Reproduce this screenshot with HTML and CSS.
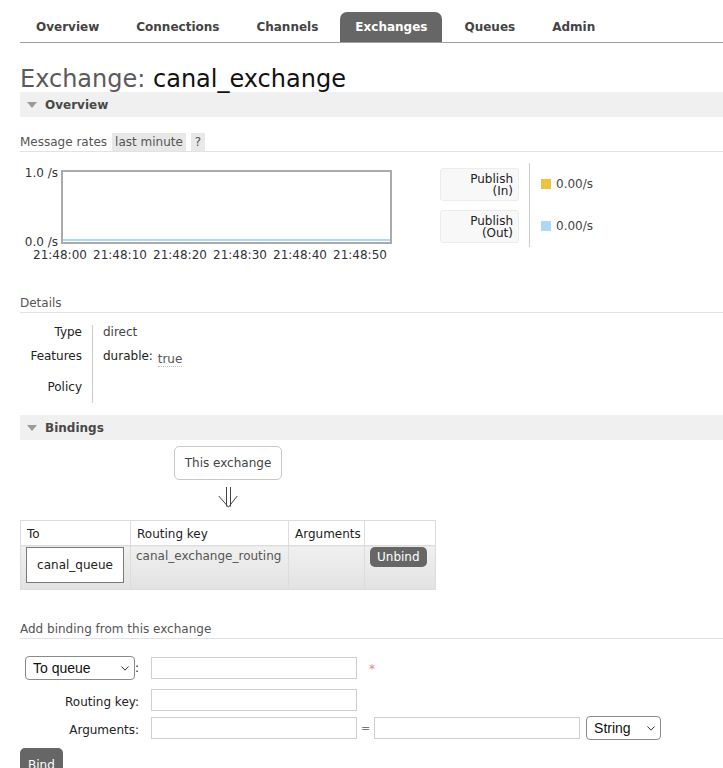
FILE: index.html
```html
<!DOCTYPE html>
<html>
<head>
<meta charset="utf-8">
<title>Exchange: canal_exchange</title>
<link rel="stylesheet" href="styles.css">
</head>
<body>
<div class="page">
  <ul class="tabs">
    <li>Overview</li>
    <li>Connections</li>
    <li>Channels</li>
    <li class="active">Exchanges</li>
    <li>Queues</li>
    <li>Admin</li>
  </ul>

  <h1><span class="pre">Exchange:</span> canal_exchange</h1>

  <div class="section">
    <div class="bar"><span class="tri"></span>Overview</div>
    <h3 class="sub"><span>Message rates</span><span class="pill">last minute</span><span class="pill q">?</span></h3>
    <div class="chart-row">
      <div class="chart">
        <div class="ylab"><span>1.0 /s</span><span>0.0 /s</span></div>
        <div class="plot"><div class="line"></div></div>
        <div class="xlab"><span>21:48:00</span><span>21:48:10</span><span>21:48:20</span><span>21:48:30</span><span>21:48:40</span><span>21:48:50</span></div>
      </div>
      <table class="legend">
        <tr>
          <td class="k"><div class="lbox"><div>Publish</div><div>(In)</div></div></td>
          <td class="v"><span class="sw yellow"></span>0.00/s</td>
        </tr>
        <tr>
          <td class="k"><div class="lbox"><div>Publish</div><div>(Out)</div></div></td>
          <td class="v"><span class="sw blue"></span>0.00/s</td>
        </tr>
      </table>
    </div>

    <h3 class="sub details-h">Details</h3>
    <table class="facts">
      <tr class="r1"><th>Type</th><td>direct</td></tr>
      <tr class="r2"><th>Features</th><td><span class="fk">durable:</span> <span class="tv">true</span></td></tr>
      <tr class="r3"><th>Policy</th><td></td></tr>
    </table>
  </div>

  <div class="section bind-sec">
    <div class="bar"><span class="tri"></span>Bindings</div>
    <div class="diagram">
      <div class="ex-box">This exchange</div>
      <svg class="arrow" width="20" height="22" viewBox="0 0 20 22">
        <path d="M8.5 1V20.5M12.5 1V20.5M0.8 10L10.5 21.2L19.2 10" fill="none" stroke="#444" stroke-width="1"/>
      </svg>
    </div>
    <table class="bt">
      <colgroup><col class="c1"><col class="c2"><col class="c3"><col class="c4"></colgroup>
      <tr><th>To</th><th>Routing key</th><th>Arguments</th><th></th></tr>
      <tr>
        <td class="to"><div class="qbox">canal_queue</div></td>
        <td class="rk">canal_exchange_routing</td>
        <td></td>
        <td class="act"><button class="btn small">Unbind</button></td>
      </tr>
    </table>
  </div>

  <h3 class="sub add-h">Add binding from this exchange</h3>
  <table class="form">
    <tr class="f1">
      <th><span class="sel"><select><option>To queue</option><option>To exchange</option></select><svg width="8" height="5" viewBox="0 0 8 5"><path d="M0.5 0.5L4 4.2L7.5 0.5" fill="none" stroke="#333" stroke-width="1"/></svg></span>:</th>
      <td><input class="inp" type="text"><span class="req">*</span></td>
    </tr>
    <tr class="f2">
      <th><span class="lab">Routing key:</span></th>
      <td><input class="inp" type="text"></td>
    </tr>
    <tr class="f3">
      <th><span class="lab">Arguments:</span></th>
      <td><input class="inp" type="text"><span class="eq">=</span><input class="inp" type="text"><span class="sel str"><select><option>String</option><option>Number</option></select><svg width="8" height="5" viewBox="0 0 8 5"><path d="M0.5 0.5L4 4.2L7.5 0.5" fill="none" stroke="#333" stroke-width="1"/></svg></span></td>
    </tr>
  </table>
  <button class="btn big">Bind</button>
</div>
</body>
</html>
```

FILE: styles.css
```css
* { box-sizing: border-box; }
html, body { margin: 0; padding: 0; background: #fff; }
body {
  font-family: "DejaVu Sans", Verdana, sans-serif;
  font-size: 12px;
  color: #484848;
}
.page { padding-left: 20px; overflow: hidden; }

/* tabs */
.tabs {
  display: flex;
  list-style: none;
  margin: 12px 0 0;
  padding: 0 0 0 1px;
  height: 31px;
  border-bottom: 1px solid #a0a0a0;
}
.tabs li {
  height: 30px;
  padding: 1px 15px 0;
  margin-right: 7px;
  line-height: 29px;
  font-weight: bold;
  color: #444;
  border-radius: 7px 7px 0 0;
}
.tabs li.active { background: #666; color: #fff; }

/* title */
h1 {
  margin: 23px 0 0;
  font-size: 24px;
  line-height: 26px;
  font-weight: normal;
  color: #111;
}
h1 .pre { color: #5a5a5a; }

/* section bars */
.bar {
  display: flex;
  align-items: center;
  height: 25px;
  background: #f0f0f0;
  font-weight: bold;
  color: #484848;
}
.tri {
  width: 0; height: 0;
  border-left: 5px solid transparent;
  border-right: 5px solid transparent;
  border-top: 6px solid #9a9a9a;
  margin: 0 8px 0 7px;
}

/* sub headings */
.sub {
  display: flex;
  gap: 5px;
  margin: 16px 0 0;
  font-size: 12px;
  font-weight: normal;
  line-height: 18px;
  color: #555;
  border-bottom: 1px solid #e2e2e2;
}
.pill { background: #e8e8e8; padding: 0 3px; }
.pill.q { padding: 0 4px; }
.details-h { margin-top: 32px; }
.add-h { margin-top: 30px; }

/* chart */
.chart-row { display: flex; align-items: flex-start; margin-top: 11px; }
.chart {
  display: grid;
  grid-template-columns: 41px 331px;
  margin-top: 7px;
  color: #333;
}
.ylab {
  display: flex;
  flex-direction: column;
  justify-content: space-between;
  align-items: flex-end;
  padding-right: 3px;
  margin: -4px 0 -5px;
  line-height: 14px;
}
.plot {
  height: 74px;
  border: 2px solid #aaa;
  background: #fff;
  display: flex;
  align-items: flex-end;
}
.plot .line { width: 100%; height: 2px; background: #afd8f8; margin-bottom: 1px; }
.xlab {
  grid-column: 1 / 3;
  display: flex;
  padding-left: 13px;
  margin-top: 4px;
  line-height: 14px;
}
.xlab span { width: 60px; flex: none; }

/* legend */
.legend { margin-left: 48px; border-collapse: collapse; }
.legend td { height: 42px; padding: 0; vertical-align: middle; }
.legend td.k { padding-right: 10px; border-right: 1px solid #ccc; }
.legend td.v { padding-left: 10px; color: #444; }
.lbox {
  display: flex;
  flex-direction: column;
  align-items: flex-end;
  justify-content: center;
  width: 79px;
  height: 33px;
  background: #f8f8f8;
  border: 1px solid #ececec;
  border-radius: 3px;
  padding: 1px 5px 0 0;
  line-height: 12px;
  color: #222;
}
.lbox div { height: 12px; line-height: 12px; }
.sw { display: inline-block; width: 10px; height: 10px; margin: 0 5px 0 1px; vertical-align: -1px; }
.sw.yellow { background: #edc240; }
.sw.blue { background: #afd8f8; }

/* details */
.facts { border-collapse: separate; border-spacing: 0; margin-top: 12px; }
.facts th, .facts td { line-height: 14px; vertical-align: top; padding-top: 0; padding-bottom: 0; }
.facts th {
  width: 73px;
  text-align: right;
  font-weight: normal;
  color: #222;
  padding-right: 10px;
  border-right: 1px solid #ccc;
}
.facts td { padding-left: 10px; color: #444; }
.facts .r1 th, .facts .r1 td { padding-bottom: 5px; }
.facts .r2 th, .facts .r2 td { padding-top: 5px; padding-bottom: 8px; }
.facts .r3 th, .facts .r3 td { padding-top: 8px; padding-bottom: 9px; }
.fk { color: #222; }
.tv { display: inline-block; margin-left: 1px; border-bottom: 1px dotted #bbb; line-height: 14px; margin-bottom: -3px; vertical-align: -3px; color: #555; }

/* bindings */
.bind-sec { margin-top: 12px; }
.diagram {
  display: flex;
  flex-direction: column;
  align-items: center;
  width: 108px;
  margin: 6px 0 0 154px;
}
.ex-box {
  width: 108px;
  height: 34px;
  border: 1px solid #c8c8c8;
  border-radius: 5px;
  display: flex;
  align-items: center;
  justify-content: center;
  color: #444;
}
.arrow { display: block; margin-top: 6px; }
.bt {
  border-collapse: collapse;
  table-layout: fixed;
  width: 415px;
  margin-top: 12px;
}
.bt .c1 { width: 110px; }
.bt .c2 { width: 158px; }
.bt .c3 { width: 76px; }
.bt .c4 { width: 71px; }
.bt th, .bt td { border: 1px solid #dcdcdc; text-align: left; font-weight: normal; }
.bt th { height: 25px; padding: 1px 6px 0; vertical-align: middle; color: #222; line-height: 14px; }
.bt td {
  height: 44px;
  vertical-align: top;
  background: linear-gradient(#f0f0f0, #e2e2e2);
  line-height: 14px;
  color: #555;
  padding: 3px 5px 0;
}
.bt td.to { padding: 1px 5px 0; }
.bt td.act { padding: 1px 5px 0; }
.qbox {
  width: 98px;
  height: 36px;
  border: 1px solid #7a7a7a;
  background: #fff;
  display: flex;
  align-items: center;
  justify-content: center;
  color: #222;
}
.btn {
  background: #666;
  color: #fff;
  border: 0;
  font: 12px "DejaVu Sans", Verdana, sans-serif;
  line-height: 14px;
  border-radius: 5px;
  display: inline-block;
}
.btn.small { padding: 3px 7px; }
.btn.big { padding: 10px 8px; margin-top: 4px; display: block; }

/* form */
.form { border-collapse: separate; border-spacing: 0; margin-top: 13px; }
.form th, .form td { padding-top: 0; padding-bottom: 0; vertical-align: middle; }
.form th {
  text-align: right;
  font-weight: normal;
  color: #222;
  white-space: nowrap;
  padding-left: 5px;
  padding-right: 12px;
}
.form td { padding-left: 0; white-space: nowrap; }
.form .f1 th, .form .f1 td { padding-top: 4px; padding-bottom: 4px; }
.form .f2 th, .form .f2 td { padding-top: 5px; padding-bottom: 2px; }
.form .f3 th, .form .f3 td { padding-top: 3px; padding-bottom: 4px; }
.lab { display: inline-block; padding-top: 4px; }
.sel { position: relative; display: inline-block; vertical-align: middle; }
.sel select {
  -webkit-appearance: none;
  appearance: none;
  display: block;
  width: 110px;
  height: 24px;
  border: 1px solid #8a8a8a;
  border-radius: 4px;
  background: #fff;
  color: #111;
  font: 14px "Liberation Sans", Arial, sans-serif;
  padding: 0 0 0 7px;
  margin: 0;
}
.sel svg { position: absolute; right: 6px; top: 10px; pointer-events: none; }
.sel.str { margin-left: 6px; }
.sel.str select { width: 75px; }
.inp {
  width: 206px;
  height: 22px;
  border: 1px solid #cfcfcf;
  border-radius: 0;
  padding: 0 4px;
  margin: 0;
  font: 12px "DejaVu Sans", Verdana, sans-serif;
  vertical-align: middle;
  background: #fff;
}
.req { color: #f08080; margin-left: 12px; vertical-align: middle; position: relative; top: 1px; }
.eq { display: inline-block; width: 17px; text-align: center; color: #777; vertical-align: middle; font-size: 11px; }
```
